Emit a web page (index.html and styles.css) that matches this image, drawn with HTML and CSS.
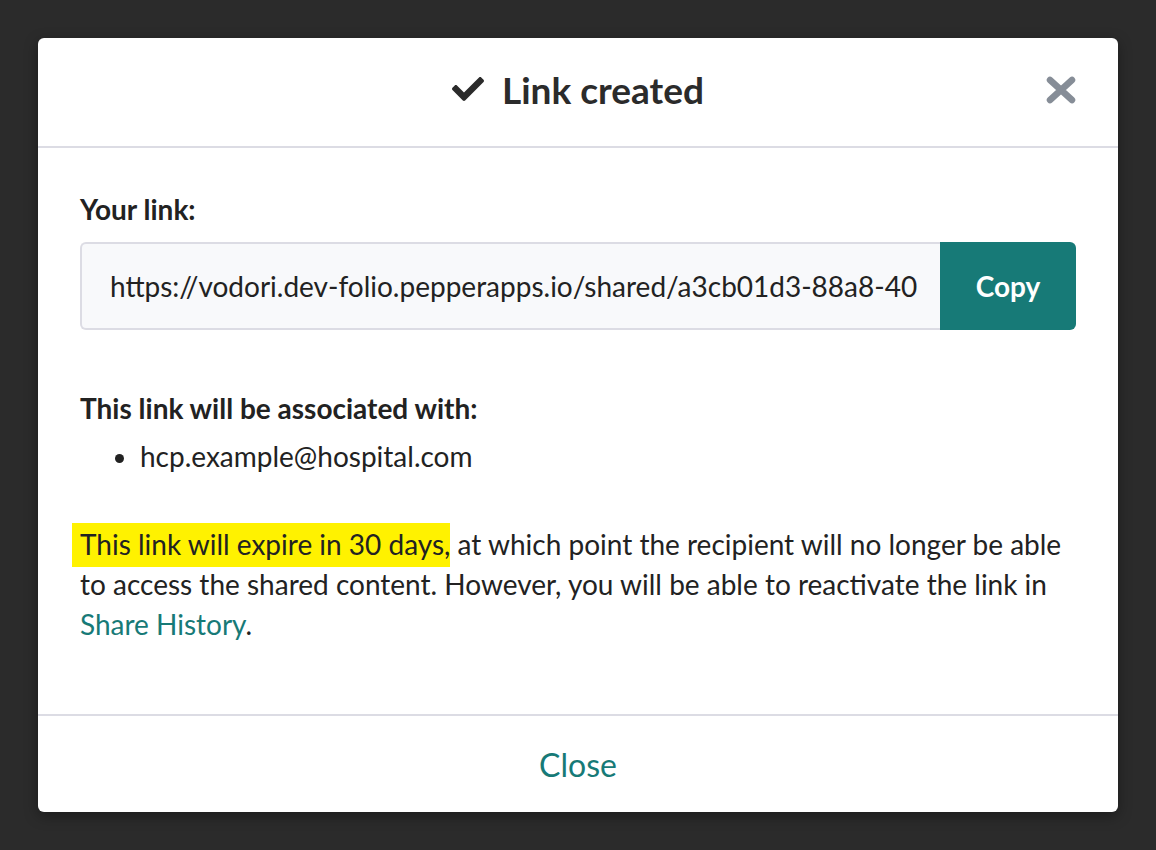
FILE: index.html
```html
<!DOCTYPE html>
<html lang="en">
<head>
    <meta charset="UTF-8">
    <title>Link created</title>
    <link rel="stylesheet" href="styles.css">
</head>
<body>

<!--分享链接弹窗-->
<div class="modal">

    <!--标题-->
    <div class="modal-header">
        <span></span>
        <h1 class="modal-title">
            <svg class="check" viewBox="0 0 512 512" width="32" height="32">
                <path d="M173.898 439.404l-166.4-166.4c-9.997-9.997-9.997-26.206 0-36.204l36.203-36.204c9.997-9.998 26.207-9.998 36.204 0L192 312.69 432.095 72.596c9.997-9.997 26.207-9.997 36.204 0l36.203 36.204c9.997 9.997 9.997 26.206 0 36.204l-294.4 294.401c-9.998 9.997-26.207 9.997-36.204-.001z" fill="#2b2b2b"/>
            </svg>
            Link created
        </h1>
        <button class="close-x" aria-label="Close">
            <svg viewBox="0 0 30 28" width="30" height="28">
                <path d="M4 4 L26 24 M26 4 L4 24" stroke="#868d97" stroke-width="6.5" stroke-linecap="round"/>
            </svg>
        </button>
    </div>

    <!--内容-->
    <div class="modal-body">
        <label class="label" for="link">Your link:</label>
        <div class="link-group">
            <input id="link" class="link-input" type="text" readonly
                   value="https://vodori.dev-folio.pepperapps.io/shared/a3cb01d3-88a8-40">
            <button class="copy-btn">Copy</button>
        </div>

        <div class="label assoc">This link will be associated with:</div>
        <ul class="recipients">
            <li>hcp.example@hospital.com</li>
        </ul>

        <p class="note">
            <mark>This link will expire in 30 days,</mark> at which point the recipient will no longer be able
            to access the shared content. However, you will be able to reactivate the link in
            <a href="#">Share History</a>.
        </p>
    </div>

    <!--底部-->
    <div class="modal-footer">
        <button class="close-btn">Close</button>
    </div>

</div>

</body>
</html>
```

FILE: styles.css
```css
/*去除默认样式*/
* {
    margin: 0;
    padding: 0;
    box-sizing: border-box;
}

body {
    background-color: #2b2b2b;
    padding: 38px;
    font-family: Lato, "Liberation Sans", sans-serif;
    color: #222;
}

/*弹窗*/
.modal {
    width: 1080px;
    height: 774px;
    margin: 0 auto;
    background-color: #fff;
    border-radius: 6px;
    box-shadow: 0 4px 14px rgba(0, 0, 0, .35);
    display: flex;
    flex-flow: column;
}

/*标题*/
.modal-header {
    height: 110px;
    border-bottom: 2px solid #dcdce4;
    display: grid;
    grid-template-columns: 1fr auto 1fr;
    align-items: center;
    padding: 0 42px;
}

.modal-title {
    font-size: 37px;
    font-weight: 700;
    color: #2b2b2b;
    display: flex;
    align-items: center;
    gap: 18px;
    padding-bottom: 6px;
}

.check {
    display: block;
}

.close-x {
    justify-self: end;
    border: none;
    background: none;
    display: flex;
    margin-bottom: 4px;
}

.close-x svg {
    display: block;
}

/*内容*/
.modal-body {
    flex: 1;
    padding: 41px 42px 0;
    font-size: 28px;
    line-height: 40px;
}

.label {
    display: block;
    font-weight: 700;
}

.link-group {
    display: flex;
    height: 88px;
    margin-top: 13px;
}

.link-input {
    flex: 1;
    min-width: 0;
    border: 2px solid #dcdce4;
    border-right: none;
    border-radius: 6px 0 0 6px;
    background-color: #f8f9fb;
    font: 28px Lato, "Liberation Sans", sans-serif;
    color: #222;
    padding: 0 20px 0 28px;
    outline: none;
}

.copy-btn {
    width: 136px;
    border: none;
    border-radius: 0 6px 6px 0;
    background-color: #177a77;
    color: #fff;
    font: 700 28px Lato, "Liberation Sans", sans-serif;
}

.assoc {
    margin-top: 58px;
}

.recipients {
    padding-left: 60px;
    margin-top: 8px;
}

.note {
    margin-top: 48px;
}

mark {
    background-color: #fff200;
    color: #222;
    padding: 4px 0 6px 8px;
    margin-left: -8px;
}

.note a {
    color: #177a77;
    text-decoration: none;
}

/*底部*/
.modal-footer {
    height: 98px;
    border-top: 2px solid #dcdce4;
    display: flex;
    justify-content: center;
    align-items: center;
}

.close-btn {
    border: none;
    background: none;
    color: #177a77;
    font: 32px Lato, "Liberation Sans", sans-serif;
}
```
